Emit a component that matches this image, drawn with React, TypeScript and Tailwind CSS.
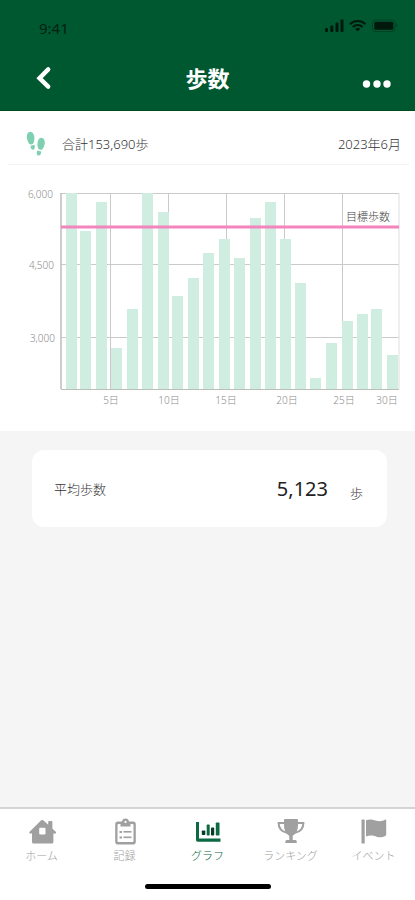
import type { ReactNode } from "react";

const PLOT = { left: 61, right: 399, top: 28, bottom: 224 };

const dayLines = [110, 168, 226, 284, 342];

const yTicks = [
  { label: "6,000", y: 28, right: 53 },
  { label: "4,500", y: 99, right: 54 },
  { label: "3,000", y: 172, right: 55 },
];

const xTicks = [
  { label: "5日", x: 111 },
  { label: "10日", x: 169 },
  { label: "15日", x: 226 },
  { label: "20日", x: 287 },
  { label: "25日", x: 344 },
  { label: "30日", x: 387 },
];

// x position and bar top, both in chart units
const bars = [
  [66, 28],
  [80, 66],
  [96, 37],
  [111, 183],
  [127, 144],
  [142, 28],
  [158, 47],
  [172, 131],
  [188, 113],
  [203, 88],
  [219, 74],
  [234, 93],
  [250, 53],
  [265, 37],
  [280, 74],
  [295, 118],
  [310, 213],
  [326, 178],
  [342, 156],
  [357, 149],
  [371, 144],
  [387, 190],
];

function StatusBar() {
  return (
    <div className="flex items-center justify-between pt-4 pl-[39px] pr-[17px]">
      <span className="text-[15px] leading-6 text-[#00210f]">9:41</span>
      <svg width="74" height="16" viewBox="0 0 74 16" className="mb-1" fill="#00190c" aria-hidden="true">
        <rect x="1" y="10" width="3" height="4" rx="1" />
        <rect x="6.3" y="7.5" width="3" height="6.5" rx="1" />
        <rect x="11.5" y="4.5" width="3" height="9.5" rx="1" />
        <rect x="16.5" y="1.5" width="3" height="12.5" rx="1" />
        <g fill="none" stroke="#00190c" strokeWidth="2">
          <path d="M26 6.2a11 11 0 0 1 15.4 0" />
          <path d="M28.8 9a7 7 0 0 1 9.8 0" />
        </g>
        <path d="M33.7 13.6l-2.6-2.8a4 4 0 0 1 5.2 0z" />
        <rect x="48.5" y="2" width="22.5" height="11.5" rx="3" fill="none" stroke="#00190c" strokeOpacity="0.35" />
        <rect x="50.3" y="3.8" width="19" height="8" rx="1.5" />
        <path d="M72.3 6v3.6q1.4-.5 1.4-1.8t-1.4-1.8z" opacity="0.4" />
      </svg>
    </div>
  );
}

function Header() {
  return (
    <header className="h-[111px] border-b border-[#004a1c] bg-[#005830]">
      <StatusBar />
      <div className="grid grid-cols-[1fr_auto_1fr] items-center pt-[22px]">
        <button type="button" aria-label="戻る" className="ml-[34px] justify-self-start">
          <svg width="20" height="24" viewBox="0 0 20 24" fill="none" stroke="#fff" strokeWidth="4.4">
            <path d="M14.2 3.4L5.500 12.2l8.700 8.400" strokeLinecap="round" />
          </svg>
        </button>
        <h1 className="text-[22px] leading-8 font-bold text-white">歩数</h1>
        <button type="button" aria-label="メニュー" className="mt-3 mr-6 justify-self-end">
          <svg width="30" height="8" viewBox="0 0 30 8" fill="#fff">
            <circle cx="5.5" cy="4" r="3.7" />
            <circle cx="16" cy="4" r="3.7" />
            <circle cx="26" cy="4" r="3.7" />
          </svg>
        </button>
      </div>
    </header>
  );
}

function Footprints() {
  return (
    <svg width="20" height="26" viewBox="0 0 20 26" fill="#7fd0b0" aria-hidden="true">
      <path d="M4 .8C6.500.6 8.300 3.500 8.400 6.500c.1 2.300-.5 5.200-1.300 6.300-1 .7-2.800.8-3.700.3C2.100 11.500.900 8.700.800 6.300.700 3.300 1.900 1 4 .8z" />
      <path d="M4.600 14.700l3.600-.9c.8 1.400 1 3.300 0 4.400-1.100.9-2.600.6-3.200-.6-.4-.9-.5-1.900-.4-2.900z" />
      <path d="M15.500 6.800c2.200.3 3.500 2.700 3.300 5.400-.2 2.500-1.400 5-2.700 6.400-.9.500-2.800.2-3.600-.5-.8-1.300-1.200-3.800-1-6 .3-3 1.900-5.600 4-5.300z" />
      <path d="M11.500 19.400l3.700 1c0 1-.2 2.100-.7 3-.7 1.100-2.200 1.400-3.200.5-1-1.100-.7-3.100.2-4.500z" />
    </svg>
  );
}

function StepChart() {
  return (
    <svg viewBox="0 0 415 266" className="block w-full font-light" role="img" aria-label="歩数グラフ">
      <g stroke="#cacaca" strokeWidth="1">
        {yTicks.map((t) => (
          <line key={t.label} x1={PLOT.left} x2={PLOT.right} y1={t.y + 0.5} y2={t.y + 0.5} />
        ))}
        {dayLines.map((x) => (
          <line key={x} x1={x + 0.5} x2={x + 0.5} y1={PLOT.top} y2={PLOT.bottom} />
        ))}
        <line x1={PLOT.right} x2={PLOT.right} y1={PLOT.top} y2={PLOT.bottom} stroke="#dedede" />
      </g>
      <g fill="#cfeee1">
        {bars.map(([x, y]) => (
          <rect key={x} x={x} y={y} width="11" height={PLOT.bottom - y} />
        ))}
      </g>
      <g stroke="#bdbdbd">
        <line x1={PLOT.left} x2={PLOT.left} y1={PLOT.top} y2={PLOT.bottom} strokeWidth="1.5" />
        <line x1={PLOT.left} x2={PLOT.right} y1={PLOT.bottom + 0.5} y2={PLOT.bottom + 0.5} />
      </g>
      <rect x={PLOT.left} y="60.500" width={PLOT.right - PLOT.left} height="3" fill="#f484bc" />
      <text x="390" y="56" textAnchor="end" fontSize="11" fill="#444">
        目標歩数
      </text>
      <g fontSize="10" fill="#8c8c8c">
        {yTicks.map((t) => (
          <text key={t.label} x={t.right} y={t.y + 5} textAnchor="end">
            {t.label}
          </text>
        ))}
        {xTicks.map((t) => (
          <text key={t.label} x={t.x} y="239" textAnchor="middle">
            {t.label}
          </text>
        ))}
      </g>
    </svg>
  );
}

function NavIcon({ children }: { children: ReactNode }) {
  return (
    <svg width="30" height="28" viewBox="0 0 30 28" fill="currentColor" aria-hidden="true">
      {children}
    </svg>
  );
}

const navItems = [
  {
    label: "ホーム",
    icon: (
      <path
        fillRule="evenodd"
        d="M14.200 2.300q1-.8 2 0l5 4.500V4q0-1 1-1h2.200q1 0 1 1v6.800l3.400 3q.8.900 0 1.700H26.400V24q0 1.500-1.500 1.500H6.500Q5 25.500 5 24v-8.500H2.600q-.8-.8 0-1.700zM13.200 9.800q-1 0-1 1v4.700q0 1 1 1h4.300q1 0 1-1v-4.700q0-1-1-1z"
      />
    ),
  },
  {
    label: "記録",
    icon: (
      <>
        <path
          fillRule="evenodd"
          d="M12 3.500C12.300 1.500 13.500.500 15.500.500S18.700 1.500 19 3.500h4q2.800 0 2.800 2.800v17.400q0 2.800-2.800 2.800H8q-2.800 0-2.800-2.800V6.300q0-2.800 2.800-2.800zM10.500 6H8.500q-1 0-1 1v16q0 1 1 1h14q1 0 1-1V7q0-1-1-1h-2v2.500h-10zM15.500 2.800a1.100 1.100 0 1 0 0 2.200 1.100 1.100 0 0 0 0-2.200z"
        />
        <rect x="9.500" y="13" width="2.500" height="2" />
        <rect x="13.500" y="13" width="8" height="1.600" />
        <rect x="9.500" y="18.500" width="2.500" height="2" />
        <rect x="13.500" y="18.500" width="8" height="1.600" />
      </>
    ),
  },
  {
    label: "グラフ",
    active: true,
    icon: (
      <>
        <path d="M3 4H6V20.500H27.500V23.700H4.800q-1.800 0-1.800-1.800z" />
        <rect x="8.800" y="12.500" width="3.500" height="4.500" rx=".8" fill="#0b3a26" />
        <rect x="13.700" y="6.500" width="3" height="11" rx=".8" />
        <rect x="18" y="9.500" width="3.200" height="8" rx=".8" fill="#0b3a26" />
        <rect x="22.800" y="4.500" width="3.700" height="13" rx=".8" />
      </>
    ),
  },
  {
    label: "ランキング",
    icon: (
      <>
        <path d="M8 2q0-1 1-1h12q1 0 1 1v4.500c0 6-2 9.500-5.300 11.300v4.200h2.600q1.500.2 1.500 2v1H9.300v-1q0-1.800 1.500-2h2.500v-4.200C10 16 8 12.500 8 6.500z" />
        <path
          d="M8.500 4.900H2.600c0 5.100 3 8.600 8.400 10M21.500 4.900h5.900c0 5.100-3 8.600-8.400 10"
          fill="none"
          stroke="currentColor"
          strokeWidth="2"
        />
      </>
    ),
  },
  {
    label: "イベント",
    icon: (
      <>
        <rect x="2.500" y="1.500" width="3.200" height="24" rx=".6" />
        <path d="M7 2.200c3.500-1.200 6-.8 9.500.3 4 1.200 7 .6 10-1q.7-.3.700.5v15.200c-2.700 2-5.700 2.700-9.700 1.500-4-1.300-6.500-1.500-10.500-.2z" />
      </>
    ),
  },
];

function BottomNav() {
  return (
    <footer className="mt-auto border-t-2 border-[#d4d4d4] bg-white">
      <nav className="grid grid-cols-5 pt-[9px]">
        {navItems.map((item) => (
          <a
            key={item.label}
            href="#"
            aria-current={item.active ? "page" : undefined}
            className={`flex flex-col items-center ${item.active ? "text-[#0b6a42]" : "text-[#a0a0a0]"}`}
          >
            <NavIcon>{item.icon}</NavIcon>
            <span className="text-[11px] leading-5 font-light">{item.label}</span>
          </a>
        ))}
      </nav>
      <div className="mx-auto mt-[18px] mb-[11px] h-[5px] w-[126px] rounded-full bg-black" />
    </footer>
  );
}

export default function App() {
  return (
    <div className="flex min-h-screen flex-col bg-[#f5f5f5] font-['Noto_Sans','Noto_Sans_CJK_JP',sans-serif]">
      <Header />
      <main>
        <section className="bg-white">
          <div className="mr-1.5 ml-2 flex h-[54px] items-center border-b border-[#f2f2f2] pt-3 pr-2 pl-[18px] text-[13px] leading-5 font-light text-[#333]">
            <Footprints />
            <span className="ml-4">合計153,690歩</span>
            <span className="ml-auto">2023年6月</span>
          </div>
          <StepChart />
        </section>
        <section className="mt-[19px] mr-7 ml-8 flex h-[77px] items-center rounded-xl bg-white pr-6 pl-[22px] text-[13px] leading-5 font-light text-[#333]">
          <span>平均歩数</span>
          <span className="ml-auto text-xl leading-7 font-normal text-[#222]">5,123</span>
          <span className="mt-2 ml-[22px]">歩</span>
        </section>
      </main>
      <BottomNav />
    </div>
  );
}
